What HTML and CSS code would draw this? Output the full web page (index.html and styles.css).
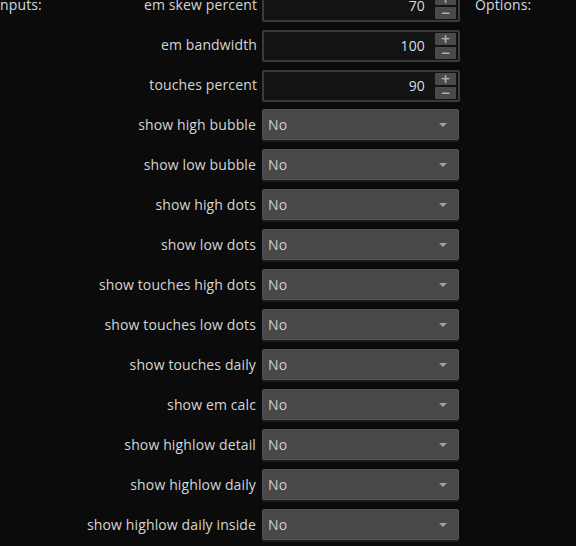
FILE: index.html
```html
<!DOCTYPE html>
<html>
<head>
<meta charset="utf-8">
<link rel="stylesheet" href="styles.css">
</head>
<body>
<div class="page">
  <div class="inputs">
    <div class="row">
      <div class="label first"><span class="title">Inputs:</span><span>em skew percent</span></div>
      <div class="spin"><span class="val">70</span><span class="btns"><span class="btn">+</span><span class="btn">−</span></span></div>
    </div>
    <div class="row">
      <div class="label">em bandwidth</div>
      <div class="spin"><span class="val">100</span><span class="btns"><span class="btn">+</span><span class="btn">−</span></span></div>
    </div>
    <div class="row">
      <div class="label">touches percent</div>
      <div class="spin"><span class="val">90</span><span class="btns"><span class="btn">+</span><span class="btn">−</span></span></div>
    </div>
    <div class="row"><div class="label">show high bubble</div><div class="drop"><span>No</span><span class="arrow"></span></div></div>
    <div class="row"><div class="label">show low bubble</div><div class="drop"><span>No</span><span class="arrow"></span></div></div>
    <div class="row"><div class="label">show high dots</div><div class="drop"><span>No</span><span class="arrow"></span></div></div>
    <div class="row"><div class="label">show low dots</div><div class="drop"><span>No</span><span class="arrow"></span></div></div>
    <div class="row"><div class="label">show touches high dots</div><div class="drop"><span>No</span><span class="arrow"></span></div></div>
    <div class="row"><div class="label">show touches low dots</div><div class="drop"><span>No</span><span class="arrow"></span></div></div>
    <div class="row"><div class="label">show touches daily</div><div class="drop"><span>No</span><span class="arrow"></span></div></div>
    <div class="row"><div class="label">show em calc</div><div class="drop"><span>No</span><span class="arrow"></span></div></div>
    <div class="row"><div class="label">show highlow detail</div><div class="drop"><span>No</span><span class="arrow"></span></div></div>
    <div class="row"><div class="label">show highlow daily</div><div class="drop"><span>No</span><span class="arrow"></span></div></div>
    <div class="row"><div class="label">show highlow daily inside</div><div class="drop"><span>No</span><span class="arrow"></span></div></div>
  </div>
  <div class="options">Options:</div>
</div>
</body>
</html>
```
FILE: styles.css
```css
html, body {
  margin: 0;
  padding: 0;
  background: #0b0b0b;
  overflow: hidden;
}
body {
  width: 576px;
  height: 546px;
  font-family: "Open Sans", "Noto Sans", sans-serif;
  font-size: 14px;
  letter-spacing: 0.13px;
  color: #d6d6d6;
}
.page {
  display: flex;
  margin-top: -15px;
}
.inputs {
  width: 460px;
  display: flex;
  flex-direction: column;
}
.row {
  height: 40px;
  display: flex;
  align-items: center;
}
.label {
  flex: 1;
  text-align: right;
  padding-right: 5px;
  white-space: nowrap;
  line-height: 18px;
}
.label.first {
  display: flex;
  justify-content: space-between;
  margin-left: -4px;
}
.title, .options {
  color: #d4dae2;
}
.options {
  margin-left: 15px;
  height: 40px;
  display: flex;
  align-items: center;
  line-height: 18px;
}
.spin {
  width: 198px;
  height: 32px;
  box-sizing: border-box;
  border: 2px solid #3a3a3a;
  border-radius: 2px;
  background: #131313;
  display: flex;
  align-items: center;
  justify-content: flex-end;
  padding-right: 2px;
  margin-top: 1px;
}
.val {
  color: #d8dde4;
  margin-right: 10px;
}
.btns {
  display: flex;
  flex-direction: column;
  gap: 2px;
}
.btn {
  width: 21px;
  height: 12px;
  background: #4a4a4a;
  border-radius: 1px;
  color: #b4b4b4;
  font-family: "DejaVu Sans", sans-serif;
  font-weight: bold;
  font-size: 12px;
  line-height: 12px;
  letter-spacing: 0;
  text-align: center;
}
.drop {
  width: 197px;
  height: 31px;
  box-sizing: border-box;
  margin-left: 1px;
  margin-right: 1px;
  margin-top: -1px;
  background: #484848;
  border: 1px solid #545454;
  border-radius: 2px;
  box-shadow: 0 2px 0 #1c1c1c;
  display: flex;
  align-items: center;
  justify-content: space-between;
  padding: 0 11px 0 5px;
  color: #c9ced6;
}
.arrow {
  width: 0;
  height: 0;
  border-left: 4px solid transparent;
  border-right: 4px solid transparent;
  border-top: 4px solid #a0a0a0;
}
```
